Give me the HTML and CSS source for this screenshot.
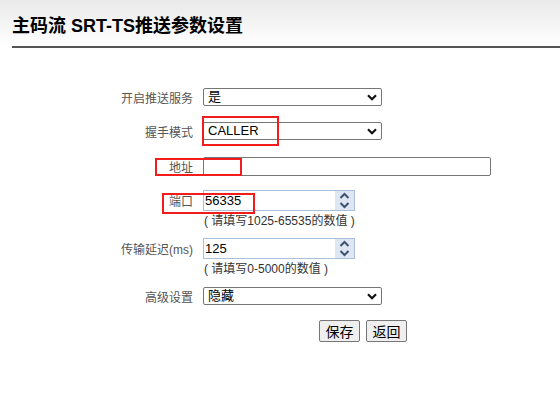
FILE: index.html
```html
<!DOCTYPE html>
<html lang="zh-CN">
<head>
<meta charset="utf-8">
<title>主码流 SRT-TS推送参数设置</title>
<link rel="stylesheet" href="styles.css">
</head>
<body>
<div class="page">
  <header class="head">
    <h1 class="title">主码流 SRT-TS推送参数设置</h1>
  </header>
  <form class="form">
    <div class="row r1">
      <label class="lbl">开启推送服务</label>
      <div class="sel w179"><span class="val cjk">是</span><svg class="chev" width="10" height="7" viewBox="0 0 10 7"><path d="M1 1.2 L5 5.2 L9 1.2" fill="none" stroke="#111" stroke-width="2.2"/></svg></div>
    </div>
    <div class="row r2">
      <label class="lbl">握手模式</label>
      <div class="sel w179"><span class="val">CALLER</span><svg class="chev" width="10" height="7" viewBox="0 0 10 7"><path d="M1 1.2 L5 5.2 L9 1.2" fill="none" stroke="#111" stroke-width="2.2"/></svg></div>
    </div>
    <div class="row r3">
      <label class="lbl">地址</label>
      <div class="txt w288"></div>
    </div>
    <div class="row r4">
      <label class="lbl">端口</label>
      <div class="ctl">
        <div class="num"><span class="nval">56335</span><span class="spin"><svg width="11" height="17" viewBox="0 0 11 17"><path d="M1.5 6 L5.5 2 L9.5 6" fill="none" stroke="#3f5170" stroke-width="2"/><path d="M1.5 11 L5.5 15 L9.5 11" fill="none" stroke="#3f5170" stroke-width="2"/></svg></span></div>
        <div class="hint">( 请填写1025-65535的数值 )</div>
      </div>
    </div>
    <div class="row r5">
      <label class="lbl">传输延迟(ms)</label>
      <div class="ctl">
        <div class="num"><span class="nval">125</span><span class="spin"><svg width="11" height="17" viewBox="0 0 11 17"><path d="M1.5 6 L5.5 2 L9.5 6" fill="none" stroke="#3f5170" stroke-width="2"/><path d="M1.5 11 L5.5 15 L9.5 11" fill="none" stroke="#3f5170" stroke-width="2"/></svg></span></div>
        <div class="hint">( 请填写0-5000的数值 )</div>
      </div>
    </div>
    <div class="row r6">
      <label class="lbl">高级设置</label>
      <div class="sel w179"><span class="val cjk">隐藏</span><svg class="chev" width="10" height="7" viewBox="0 0 10 7"><path d="M1 1.2 L5 5.2 L9 1.2" fill="none" stroke="#111" stroke-width="2.2"/></svg></div>
    </div>
    <div class="btns">
      <button type="button" class="btn">保存</button>
      <button type="button" class="btn">返回</button>
    </div>
  </form>
  <div class="mark m1"></div>
  <div class="mark m2"></div>
  <div class="mark m3"></div>
</div>
</body>
</html>
```
FILE: styles.css
```css
html, body {
  margin: 0;
  padding: 0;
  background: #fff;
}
body {
  font-family: "Liberation Sans", "Noto Sans CJK SC", Arial, sans-serif;
  color: #333;
}
.page {
  position: relative;
  width: 560px;
  height: 400px;
  overflow: hidden;
}
.head {
  background: linear-gradient(to bottom, #e9e9e9 0px, #ffffff 46px);
}
.title {
  margin: 0 0 0 12px;
  height: 30px;
  padding-top: 16px;
  line-height: 20px;
  font-size: 18px;
  font-weight: bold;
  color: #000;
  border-bottom: 2px solid #555;
}
.form {
  margin: 40px 0 0 0;
  display: flex;
  flex-direction: column;
}
.row {
  display: flex;
  align-items: flex-start;
}
.lbl {
  box-sizing: border-box;
  width: 193px;
  margin-right: 10px;
  padding-top: 2px;
  text-align: right;
  font-size: 12px;
  color: #555;
}
.r1, .r2, .r6 { height: 18px; }
.r1 .lbl, .r2 .lbl, .r6 .lbl { line-height: 18px; }
.r1 { margin-bottom: 16px; }
.r2 { margin-bottom: 17px; }
.r3 { height: 19px; margin-bottom: 14px; }
.r3 .lbl { line-height: 19px; }
.r4 { margin-bottom: 9px; }
.r5 { margin-bottom: 10px; }
.r4 .lbl, .r5 .lbl { line-height: 21px; }
.r6 { margin-bottom: 15px; }

.sel {
  box-sizing: border-box;
  height: 18px;
  border: 1px solid #767676;
  border-radius: 2px;
  display: flex;
  align-items: center;
  justify-content: space-between;
  padding: 0 4px 0 4px;
  background: #fff;
}
.w179 { width: 179px; }
.val {
  font-size: 13px;
  color: #000;
  line-height: 16px;
}
.chev { display: block; }
.txt {
  box-sizing: border-box;
  height: 19px;
  border: 1px solid #767676;
  border-radius: 2px;
  background: #fff;
}
.w288 { width: 288px; }
.ctl {
  display: flex;
  flex-direction: column;
}
.num {
  box-sizing: border-box;
  width: 152px;
  height: 21px;
  border: 1px solid #a9c0dc;
  display: flex;
  justify-content: space-between;
  background: #fff;
}
.nval {
  font-size: 13px;
  color: #000;
  line-height: 19px;
  padding-left: 1px;
}
.spin {
  width: 19px;
  background: #dde6f2;
  display: flex;
  align-items: center;
  justify-content: center;
}
.spin svg { display: block; }
.hint {
  font-size: 12px;
  line-height: 16px;
  padding-top: 2px;
  color: #333;
  padding-left: 1px;
}
.btns {
  display: flex;
  gap: 6px;
  margin-left: 319px;
}
.btn {
  box-sizing: border-box;
  height: 22px;
  width: 41px;
  padding: 0;
  border: 1px solid #767676;
  border-radius: 2px;
  background: #efefef;
  font-family: "Noto Sans CJK SC", sans-serif;
  font-size: 14px;
  line-height: 18px;
  color: #000;
}
.mark {
  position: absolute;
  box-sizing: border-box;
  border: 2px solid #f21c1c;
}
.m1 { left: 202px; top: 116px; width: 77px; height: 30px; }
.m2 { left: 155px; top: 158px; width: 87px; height: 18px; }
.m3 { left: 162px; top: 193px; width: 93px; height: 21px; }
```
